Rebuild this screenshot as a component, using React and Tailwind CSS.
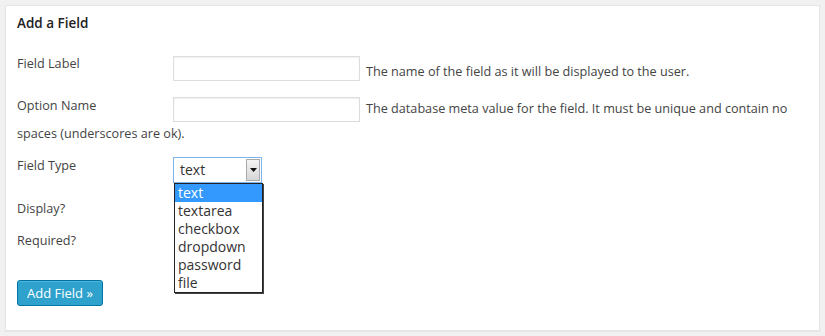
const options = ['text', 'textarea', 'checkbox', 'dropdown', 'password', 'file'];

const App = () => {
  return (
    <div className="h-[336px] w-[825px] bg-[#f1f1f1] p-[5px] font-['Open_Sans',sans-serif] text-[12.65px] text-[#444]">
      <div className="relative h-[326px] w-[815px] border border-[#e5e5e5] bg-white shadow-[0_1px_1px_rgba(0,0,0,0.04)]">
        <h3 className="px-[11px] pt-[8px] text-[13.5px] font-semibold leading-[18px] text-[#222]">Add a Field</h3>

        <div className="px-[11px] pt-[24px] leading-[26px]">
          <p className="flex items-start">
            <label className="w-[156px] leading-[14px]">Field Label</label>
            <input type="text" className="h-[25px] w-[187px] border border-[#ddd] bg-white shadow-[inset_0_1px_2px_rgba(0,0,0,0.07)] outline-none" />
            <span className="ml-[6px] mt-[2px]">The name of the field as it will be displayed to the user.</span>
          </p>

          <p className="mt-[13px] leading-[23px]">
            <label className="inline-block w-[156px] pt-[1px] align-top leading-[14px]">Option Name</label>
            <input type="text" className="h-[25px] w-[187px] border border-[#ddd] bg-white align-top shadow-[inset_0_1px_2px_rgba(0,0,0,0.07)] outline-none" />
            <span className="ml-[6px]">The database meta value for the field. It must be unique and contain no spaces (underscores are ok).</span>
          </p>

          <div className="mt-[12px] flex items-start">
            <label className="w-[156px] pt-[1px] leading-[14px]">Field Type</label>
            <div className="relative">
              <div className="flex h-[26px] w-[89px] items-center border border-[#7eb4ea] bg-white">
                <span className="flex-1 pl-[6px] text-[14px] text-[#333]">text</span>
                <span className="mr-[1px] flex h-[22px] w-[14px] items-center justify-center border border-[#aaa] bg-gradient-to-b from-[#f4f4f4] to-[#d6d6d6]">
                  <svg width="7" height="4" viewBox="0 0 7 4"><path d="M0 0h7L3.5 4z" fill="#111" /></svg>
                </span>
              </div>
              <ul className="absolute left-[1px] top-[26px] z-10 w-[89px] border border-[#222] bg-white text-[14px] leading-[18px] text-[#333] shadow-[1px_1px_0_#444]">
                {options.map((opt, i) => (
                  <li key={opt} className={i === 0 ? 'bg-[#3399ff] pl-[3px] text-white' : 'pl-[3px]'}>
                    {opt}
                  </li>
                ))}
              </ul>
            </div>
          </div>

          <p className="mt-[18px] leading-[14px]">Display?</p>
          <p className="mt-[18px] leading-[14px]">Required?</p>

          <button
            type="button"
            className="mt-[33px] h-[26px] rounded-[3px] border border-[#0074a2] bg-[#2ea2cc] px-[9px] text-[13px] leading-[24px] text-white shadow-[inset_0_1px_0_rgba(120,200,230,0.5)]"
          >
            Add Field »
          </button>
        </div>
      </div>
    </div>
  );
};

export default App;
